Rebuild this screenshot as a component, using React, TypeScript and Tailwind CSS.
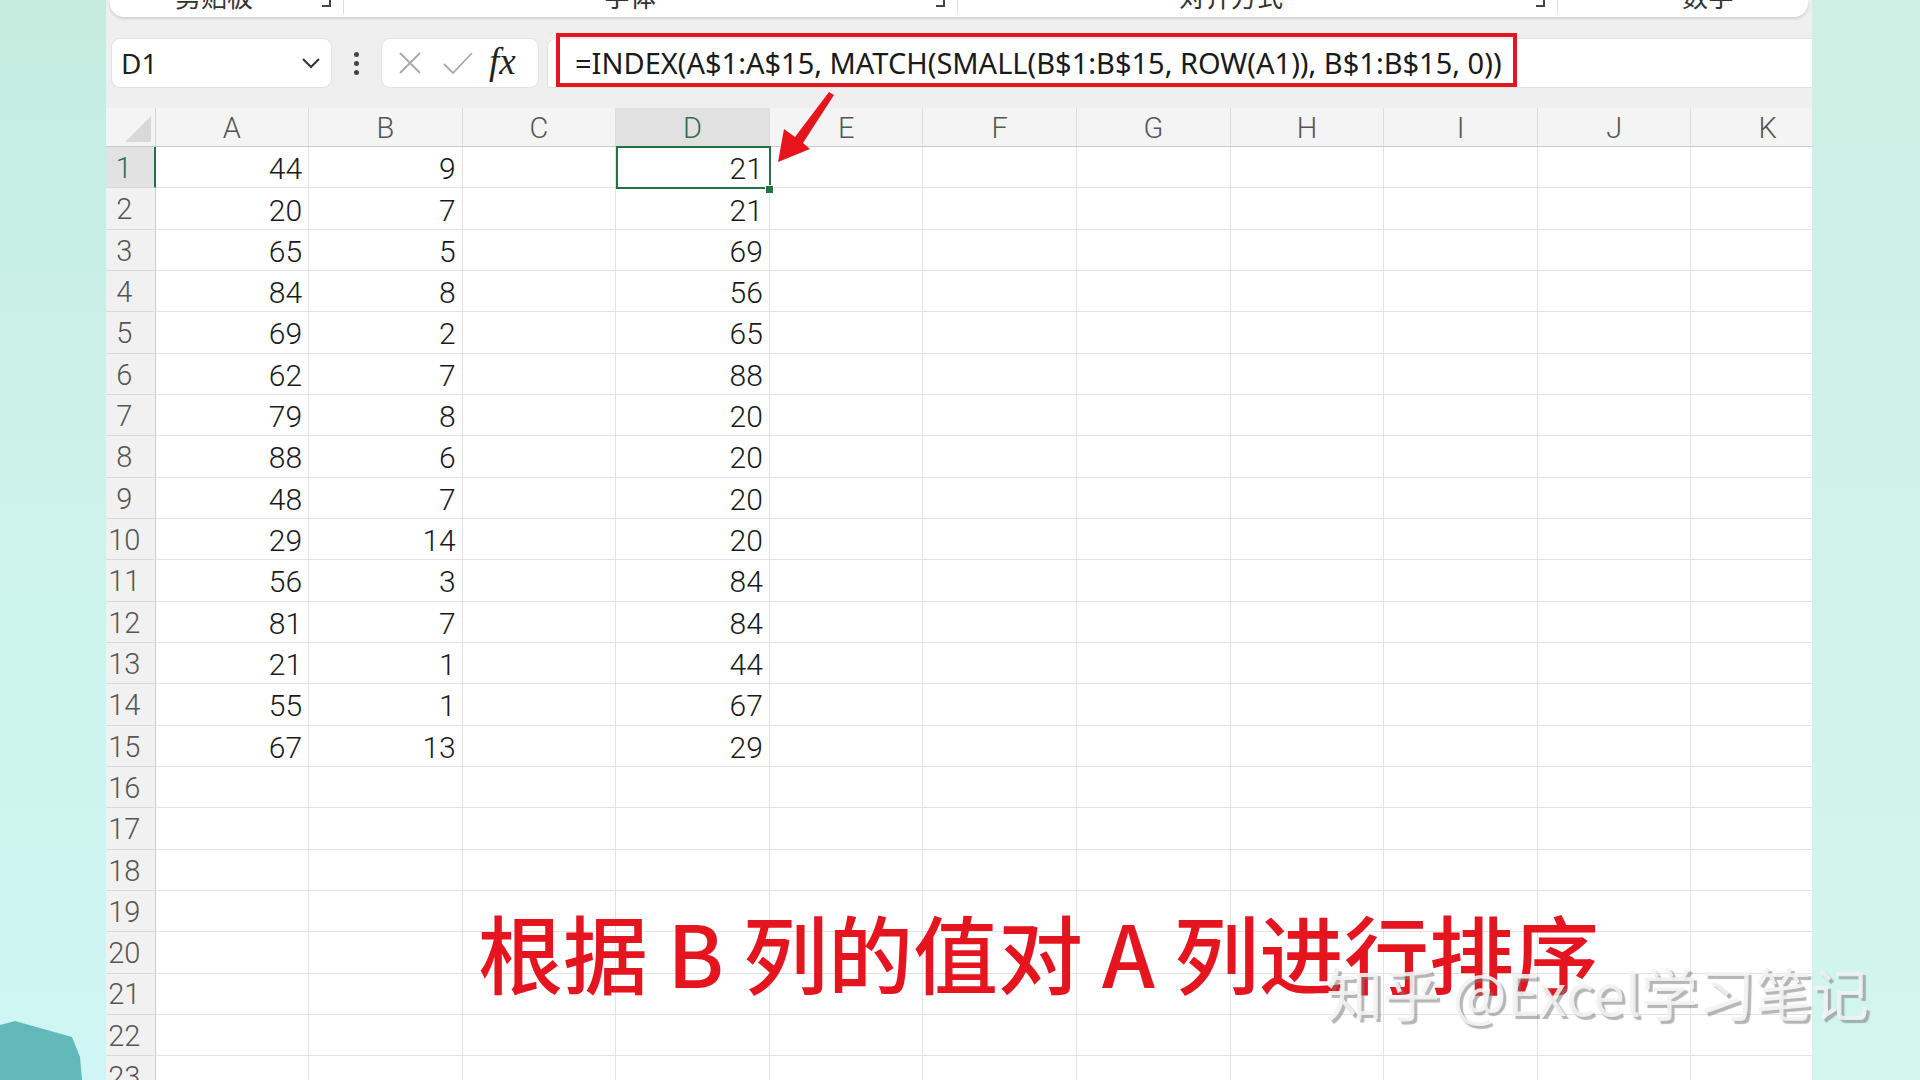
import React from "react";

const A = [44, 20, 65, 84, 69, 62, 79, 88, 48, 29, 56, 81, 21, 55, 67];
const B = [9, 7, 5, 8, 2, 7, 8, 6, 7, 14, 3, 7, 1, 1, 13];
const D = [21, 21, 69, 56, 65, 88, 20, 20, 20, 20, 84, 84, 44, 67, 29];
const COLS = ["A", "B", "C", "D", "E", "F", "G", "H", "I", "J", "K"];
const ROWS = Array.from({ length: 23 }, (_, i) => i + 1);

const FONT = { fontFamily: "Roboto, 'Noto Sans', sans-serif" };

function cellValue(col: string, r: number): string {
  if (r > 15) return "";
  if (col === "A") return String(A[r - 1]);
  if (col === "B") return String(B[r - 1]);
  if (col === "D") return String(D[r - 1]);
  return "";
}

function Ribbon() {
  const labels = [
    { t: "剪贴板", l: 65 },
    { t: "字体", l: 494 },
    { t: "对齐方式", l: 1069 },
    { t: "数字", l: 1572 },
  ];
  const launchers = [212, 826, 1426];
  return (
    <div className="relative h-[17px] mx-[4px] bg-white rounded-b-[14px] overflow-hidden shadow-[0_2px_3px_rgba(0,0,0,0.12)] shrink-0">
      {labels.map((x) => (
        <span
          key={x.t}
          className="absolute top-[-17px] text-[26px] leading-none text-[#333] font-['Noto_Sans_CJK_SC',sans-serif]"
          style={{ left: x.l }}
        >
          {x.t}
        </span>
      ))}
      {launchers.map((l) => (
        <div key={l} className="absolute top-0 flex items-start gap-[6px]" style={{ left: l }}>
          <div className="w-[9px] h-[7px] border-r-[2px] border-b-[2px] border-[#444]" />
          <div className="w-[1px] h-[14px] bg-[#ddd] ml-[6px]" />
        </div>
      ))}
    </div>
  );
}

function FormulaBar() {
  return (
    <div className="relative flex items-center h-[50px] mt-[21px] shrink-0">
      <div className="ml-[5px] w-[221px] h-[50px] bg-white rounded-[9px] border border-[#e2e2e2] flex items-center justify-between pl-[9px] pr-[10px]">
        <span className="text-[28px] text-[#1f1f1f] leading-none" style={{ fontFamily: "'Noto Sans', sans-serif" }}>
          D1
        </span>
        <svg width="20" height="12" viewBox="0 0 20 12">
          <path d="M2 2 L10 10 L18 2" fill="none" stroke="#333" strokeWidth="2" />
        </svg>
      </div>
      <div className="w-[49px] flex flex-col items-center gap-[4px]">
        <div className="w-[5px] h-[5px] rounded-full bg-[#444]" />
        <div className="w-[5px] h-[5px] rounded-full bg-[#444]" />
        <div className="w-[5px] h-[5px] rounded-full bg-[#444]" />
      </div>
      <div className="w-[158px] h-[50px] bg-white rounded-[9px] border border-[#e2e2e2] flex items-center pl-[15px] gap-[19px]">
        <svg width="26" height="26" viewBox="0 0 26 26">
          <path d="M3 3 L23 23 M23 3 L3 23" stroke="#a8a8a8" strokeWidth="1.8" fill="none" />
        </svg>
        <svg width="32" height="26" viewBox="0 0 32 26">
          <path d="M2 14 L11 23 L30 3" stroke="#a8a8a8" strokeWidth="1.8" fill="none" />
        </svg>
        <span
          className="text-[37px] italic leading-none text-[#222] -ml-[4px] -mt-[4px]"
          style={{ fontFamily: "'Liberation Serif', serif" }}
        >
          fx
        </span>
      </div>
      <div className="ml-[8px] flex-1 h-[50px] bg-white rounded-tl-[9px] border-y border-l border-[#e2e2e2] flex items-center pl-[27px]">
        <span className="text-[29px] text-[#1a1a1a] whitespace-nowrap" style={{ fontFamily: "'Noto Sans', sans-serif" }}>
          =INDEX(A$1:A$15, MATCH(SMALL(B$1:B$15, ROW(A1)), B$1:B$15, 0))
        </span>
      </div>
      <div className="absolute left-[450px] top-[-5px] w-[961px] h-[54px] border-[4px] border-[#e3151e] pointer-events-none" />
    </div>
  );
}

function HeaderRow() {
  return (
    <div className="flex h-[39px] border-b border-[#c9c9c9] bg-[#f4f4f4] shrink-0">
      <div className="w-[49.5px] shrink-0 relative border-r border-[#d6d6d6]">
        <svg className="absolute right-[4px] bottom-[4px]" width="26" height="26" viewBox="0 0 26 26">
          <path d="M26 0 L26 26 L0 26 Z" fill="#d9d9d9" />
        </svg>
      </div>
      {COLS.map((c) => (
        <div
          key={c}
          className={`w-[153.6px] shrink-0 flex items-center justify-center pt-[3px] border-r border-[#dcdcdc] text-[29px] font-light ${
            c === "D" ? "bg-[#e1e1e1] text-[#2e6f4a]" : "text-[#555]"
          }`}
          style={FONT}
        >
          {c}
        </div>
      ))}
    </div>
  );
}

function GridRow({ r }: { r: number }) {
  const sel = r === 1;
  return (
    <div className="flex h-[41.34px] shrink-0">
      <div
        className={`w-[49.5px] shrink-0 flex items-center justify-center pr-[12px] pt-[3px] border-b border-[#dadada] text-[29px] font-light ${
          sel ? "bg-[#e2e2e2] text-[#2e6f4a] border-r-[2px] border-r-[#217346]" : "bg-[#f1f1f1] text-[#555] border-r border-r-[#cfcfcf]"
        }`}
        style={FONT}
      >
        {r}
      </div>
      {COLS.map((c) => (
        <div
          key={c}
          className="w-[153.6px] shrink-0 flex items-center justify-end pr-[6px] pt-[3px] bg-white border-r border-b border-[#e3e3e3] text-[30px] font-light text-[#1a1a1a]"
          style={FONT}
        >
          {cellValue(c, r)}
        </div>
      ))}
    </div>
  );
}

function Arrow() {
  return (
    <svg className="absolute left-0 top-0 pointer-events-none" width="1920" height="1080">
      <polygon
        points="778,162 784,129 795,137 829,92 834,95 803,143 810,149"
        fill="#e6141c"
      />
    </svg>
  );
}

export default function App() {
  return (
    <div className="relative w-[1920px] h-[1080px] overflow-hidden flex bg-[#cdefe5]">
      <div className="relative w-[106px] h-full shrink-0 bg-gradient-to-b from-[#c5ecdf] via-[#cdf3ec] to-[#cff6f4]">
        <svg className="absolute left-0 top-0" width="106" height="1080">
          <polygon points="0,1025 15,1021 72,1037 80,1057 82,1080 0,1080" fill="#63b8ba" />
        </svg>
      </div>
      <div className="relative w-[1706px] h-full shrink-0 bg-[#efefef] flex flex-col overflow-hidden">
        <Ribbon />
        <FormulaBar />
        <div className="h-[20px] shrink-0" />
        <HeaderRow />
        {ROWS.map((r) => (
          <GridRow key={r} r={r} />
        ))}
        <div className="absolute left-[509.8px] top-[146px] w-[155px] h-[43px] border-[2.5px] border-[#217346] pointer-events-none" />
        <div className="absolute left-[659px] top-[185px] w-[9px] h-[9px] bg-[#217346] border border-white pointer-events-none" />
      </div>
      <div className="flex-1 h-full bg-gradient-to-b from-[#cdefe4] to-[#d2f5ee]" />
      <Arrow />
      <div
        className="absolute left-[478px] top-[908px] text-[85px] leading-none font-medium text-[#e4151f] whitespace-nowrap"
        style={{ fontFamily: "'Noto Sans CJK SC', sans-serif" }}
      >
        根据 B 列的值对 A 列进行排序
      </div>
      <div
        className="absolute left-[1326px] top-[963px] text-[57px] leading-none text-[rgba(242,242,242,0.9)] whitespace-nowrap [text-shadow:3px_3px_1px_rgba(120,120,120,0.55)]"
        style={{ fontFamily: "'Noto Sans CJK SC', sans-serif" }}
      >
        知乎 @Excel学习笔记
      </div>
    </div>
  );
}
